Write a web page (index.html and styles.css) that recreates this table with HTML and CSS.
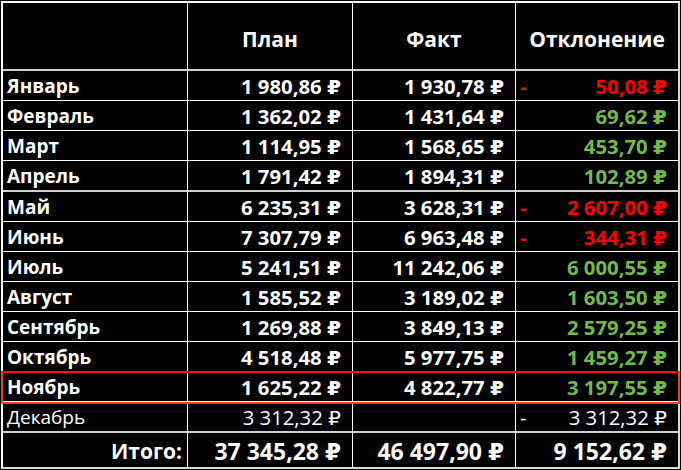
FILE: index.html
```html
<!DOCTYPE html>
<html lang="ru">
<head>
<meta charset="utf-8">
<title>План / Факт</title>
<link rel="stylesheet" href="styles.css">
</head>
<body>
<div class="sheet-wrap">
<table class="sheet">
  <colgroup>
    <col class="c-month">
    <col class="c-plan">
    <col class="c-fact">
    <col class="c-dev">
  </colgroup>
  <thead>
    <tr class="head">
      <th></th>
      <th>План</th>
      <th>Факт</th>
      <th class="last">Отклонение</th>
    </tr>
  </thead>
  <tbody>
    <tr><td class="m">Январь</td><td class="n">1 980,86 ₽</td><td class="n">1 930,78 ₽</td><td class="n last neg"><span class="sign">-</span>50,08 ₽</td></tr>
    <tr><td class="m">Февраль</td><td class="n">1 362,02 ₽</td><td class="n">1 431,64 ₽</td><td class="n last pos">69,62 ₽</td></tr>
    <tr><td class="m">Март</td><td class="n">1 114,95 ₽</td><td class="n">1 568,65 ₽</td><td class="n last pos">453,70 ₽</td></tr>
    <tr class="split"><td class="m">Апрель</td><td class="n">1 791,42 ₽</td><td class="n">1 894,31 ₽</td><td class="n last pos">102,89 ₽</td></tr>
    <tr><td class="m">Май</td><td class="n">6 235,31 ₽</td><td class="n">3 628,31 ₽</td><td class="n last neg"><span class="sign">-</span>2 607,00 ₽</td></tr>
    <tr><td class="m">Июнь</td><td class="n">7 307,79 ₽</td><td class="n">6 963,48 ₽</td><td class="n last neg"><span class="sign">-</span>344,31 ₽</td></tr>
    <tr><td class="m">Июль</td><td class="n">5 241,51 ₽</td><td class="n">11 242,06 ₽</td><td class="n last pos">6 000,55 ₽</td></tr>
    <tr><td class="m">Август</td><td class="n">1 585,52 ₽</td><td class="n">3 189,02 ₽</td><td class="n last pos">1 603,50 ₽</td></tr>
    <tr><td class="m">Сентябрь</td><td class="n">1 269,88 ₽</td><td class="n">3 849,13 ₽</td><td class="n last pos">2 579,25 ₽</td></tr>
    <tr><td class="m">Октябрь</td><td class="n">4 518,48 ₽</td><td class="n">5 977,75 ₽</td><td class="n last pos">1 459,27 ₽</td></tr>
    <tr class="current"><td class="m">Ноябрь</td><td class="n">1 625,22 ₽</td><td class="n">4 822,77 ₽</td><td class="n last pos">3 197,55 ₽</td></tr>
    <tr class="future split"><td class="m">Декабрь</td><td class="n">3 312,32 ₽</td><td class="n"></td><td class="n last"><span class="sign">-</span>3 312,32 ₽</td></tr>
  </tbody>
  <tfoot>
    <tr class="total">
      <td class="label">Итого:</td>
      <td class="n">37 345,28 ₽</td>
      <td class="n">46 497,90 ₽</td>
      <td class="n last">9 152,62 ₽</td>
    </tr>
  </tfoot>
</table>
<div class="selection"></div>
</div>
</body>
</html>
```
FILE: styles.css
```css
html, body {
  margin: 0;
  padding: 0;
  background: #000;
}

body {
  padding: 1px 0 0 1px;
  font-family: "Open Sans", "DejaVu Sans", sans-serif;
  color: #fff;
}

.sheet-wrap {
  position: relative;
  width: 679px;
}

.sheet {
  table-layout: fixed;
  border-collapse: separate;
  border-spacing: 0;
  width: 679px;
  border-top: 2px solid #fff;
  border-left: 2px solid #fff;
  border-right: 2px solid #d8d8d8;
  border-bottom: 2px solid #d8d8d8;
  background: #000;
}

.c-month { width: 185px; }
.c-plan { width: 165px; }
.c-fact { width: 163px; }
.c-dev { width: 162px; }

.sheet th,
.sheet td {
  box-sizing: border-box;
  padding: 0;
  border-right: 1px solid #fff;
  border-bottom: 1px solid #fff;
  white-space: nowrap;
  font-weight: 700;
  font-size: 20.3px;
  vertical-align: middle;
}

.sheet .last { border-right: 0; }

.head th {
  height: 68px;
  border-bottom: 2px solid #cfcfcf;
  text-align: center;
  padding-top: 6px;
  font-size: 21px;
}

tbody tr { height: 30px; }
tbody td { line-height: 26px; padding-top: 2px; }

tbody tr.split td { border-bottom: 2px solid #cfcfcf; height: 31px; }

.sheet .m {
  text-align: left;
  padding-left: 4px;
  font-size: 19px;
}

.sheet .n {
  text-align: right;
  padding-right: 11px;
}

.sign {
  float: left;
  padding-left: 4px;
}

.neg { color: #ff0000; }
.pos { color: #72b94a; }

.sheet .future td { font-weight: 400; }

.selection {
  position: absolute;
  left: 0;
  top: 370px;
  width: 679px;
  height: 33px;
  box-sizing: border-box;
  border: 2px solid #ff3a1e;
  border-top-color: #ff1010;
  pointer-events: none;
}

.sheet .total td {
  height: 34px;
  border-bottom: 0;
  font-size: 23px;
  line-height: 30px;
  padding-top: 2px;
}

.sheet .total .label {
  text-align: right;
  padding-right: 5px;
  font-size: 21px;
}
```
